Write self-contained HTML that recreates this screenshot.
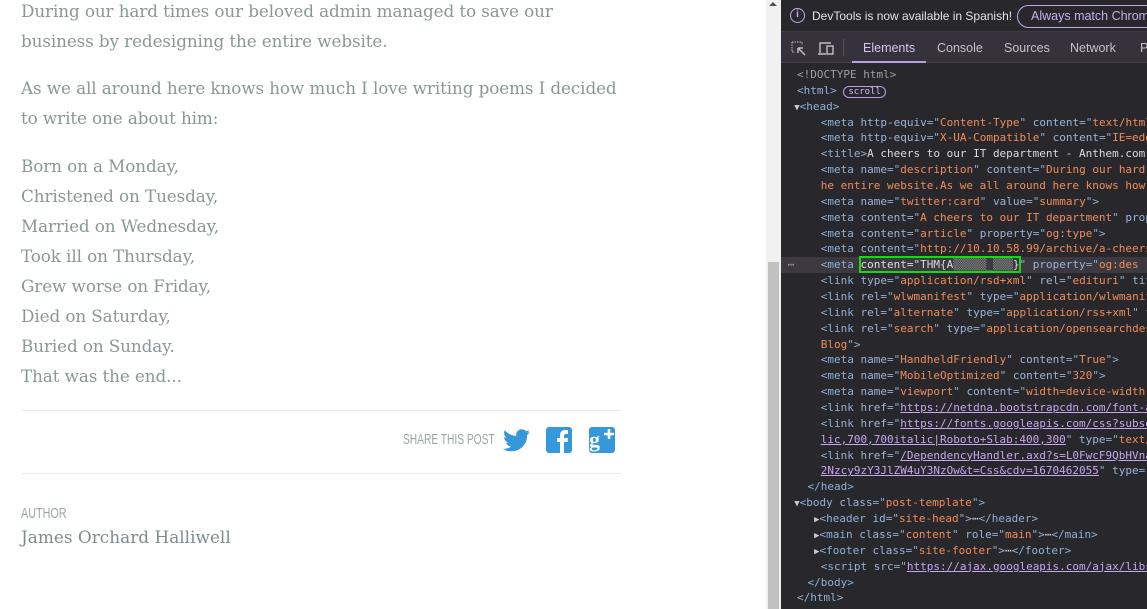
<!DOCTYPE html>
<html><head><meta charset="utf-8">
<style>
*{margin:0;padding:0;box-sizing:border-box}
html,body{width:1147px;height:609px;overflow:hidden;background:#fff;position:relative}
.p{position:absolute;left:21px;font-family:"DejaVu Serif","Liberation Serif",serif;font-size:16.8px;color:#8a9797;white-space:nowrap;letter-spacing:-0.1px}
.sb{position:absolute;left:766px;top:0;width:15px;height:609px;background:#f1f1f1}
.thumb{position:absolute;left:768px;top:262px;width:11px;height:347px;background:#c1c1c1}
.dt{position:absolute;left:781px;top:0;width:366px;height:609px;background:#28272c;overflow:hidden}
.top{position:absolute;left:0;top:0;width:366px;height:32px;background:#28272c;border-bottom:1px solid #3d3b42}
.tabs{position:absolute;left:0;top:32px;width:366px;height:31px;background:#35323b;border-bottom:1px solid #45424b}
.tab{position:absolute;top:9px;font-family:"Liberation Sans",sans-serif;font-size:12.5px;color:#c3c1c8}
.code{position:absolute;left:0;top:67px;font-family:"DejaVu Sans Mono","Liberation Mono",monospace;font-size:11px;line-height:15.87px;color:#c8c8c8}
.code div{height:15.87px;white-space:pre}
.t{color:#8fb0d6}.a{color:#9bb5d8}.v{color:#f08d5a}.x{color:#dcdcdc}.l{color:#c9a5ef;text-decoration:underline}.g{color:#a0a0a0}
.hl{background:#3c3a40}
</style></head><body>
<div class="p" style="top:1px">During our hard times our beloved admin managed to save our</div>
<div class="p" style="top:31px">business by redesigning the entire website.</div>
<div class="p" style="top:78px">As we all around here knows how much I love writing poems I decided</div>
<div class="p" style="top:108px">to write one about him:</div>
<div class="p" style="top:156px">Born on a Monday,</div>
<div class="p" style="top:186px">Christened on Tuesday,</div>
<div class="p" style="top:216px">Married on Wednesday,</div>
<div class="p" style="top:246px">Took ill on Thursday,</div>
<div class="p" style="top:276px">Grew worse on Friday,</div>
<div class="p" style="top:306px">Died on Saturday,</div>
<div class="p" style="top:336px">Buried on Sunday.</div>
<div class="p" style="top:366px">That was the end...</div>
<div style="position:absolute;left:21px;top:410px;width:600px;height:1px;background:#e8ebeb"></div>
<div style="position:absolute;left:21px;top:473px;width:600px;height:1px;background:#e8ebeb"></div>
<div style="position:absolute;left:403px;top:431px;font-family:'Liberation Sans',sans-serif;font-size:15px;color:#9aa5a5;transform:scaleX(0.68);transform-origin:left top;white-space:nowrap">SHARE THIS POST</div>
<svg style="position:absolute;left:503px;top:429px" width="27" height="23" viewBox="0 0 24 20"><path fill="#3498db" d="M24 2.4c-.9.4-1.8.6-2.8.8 1-.6 1.800-1.6 2.2-2.7-1 .6-2 1-3.1 1.2C19.3.7 18 0 16.6 0c-2.7 0-4.9 2.2-4.9 4.9 0 .4 0 .8.1 1.1C7.7 5.8 4.1 3.9 1.7.9c-.4.7-.7 1.6-.7 2.5 0 1.7.9 3.2 2.200 4.1-.8 0-1.6-.2-2.2-.6v.1c0 2.4 1.700 4.4 3.900 4.8-.4.1-.8.2-1.3.2-.3 0-.6 0-.9-.1.6 2 2.4 3.4 4.6 3.4-1.7 1.3-3.8 2.1-6.1 2.1H0c2.2 1.4 4.8 2.2 7.5 2.2 9.1 0 14-7.5 14-14v-.6c1-.7 1.8-1.6 2.5-2.6z"/></svg>
<svg style="position:absolute;left:546px;top:427px" width="26" height="26" viewBox="0 0 26 26"><rect width="26" height="26" rx="3" fill="#3498db"/><path fill="#fff" d="M14 26V15h-3v-4h3V8c0-3 2-5 5-5h3v4h-2c-1 0-2 .5-2 2v2h4l-.5 4H18v11z"/></svg>
<svg style="position:absolute;left:589px;top:427px" width="26" height="26" viewBox="0 0 26 26"><rect width="26" height="26" rx="3" fill="#3498db"/><text x="0" y="20" font-family="Liberation Serif,serif" font-size="22" font-weight="bold" fill="#fff">g</text><path d="M15 7h10M20 2v10" stroke="#fff" stroke-width="2.6"/></svg>
<div style="position:absolute;left:21px;top:505px;font-family:'Liberation Sans',sans-serif;font-size:15px;color:#9aa5a5;transform:scaleX(0.72);transform-origin:left top">AUTHOR</div>
<div style="position:absolute;left:21px;top:527px;font-family:'DejaVu Serif','Liberation Serif',serif;font-size:16.9px;color:#7e8c8c">James Orchard Halliwell</div>
<div class="sb"></div><div class="thumb"></div>
<div style="position:absolute;left:769px;top:2px;width:0;height:0;border-left:4px solid transparent;border-right:4px solid transparent;border-bottom:4px solid #505050"></div>
<div class="dt">
 <div class="top">
  <div style="position:absolute;left:9px;top:8px;width:15px;height:15px;border:1.5px solid #c5a6ef;border-radius:50%;color:#c5a6ef;font:bold 10px 'Liberation Sans',sans-serif;text-align:center;line-height:12px">i</div>
  <div style="position:absolute;left:31px;top:9px;font-family:'Liberation Sans',sans-serif;font-size:12px;color:#e3e3e3;white-space:nowrap">DevTools is now available in Spanish!</div>
  <div style="position:absolute;left:236px;top:5px;width:160px;height:23px;border:1px solid #c5a6ef;border-radius:12px;font-family:'Liberation Sans',sans-serif;font-size:12.5px;color:#c9adf0;padding:3px 0 0 13px;white-space:nowrap">Always match Chrome</div>
 </div>
 <div class="tabs">
  <svg style="position:absolute;left:10px;top:9px" width="16" height="16" viewBox="0 0 16 16"><path d="M1 1h10v3M1 1v10h3" stroke="#c0c0c0" stroke-dasharray="1.5 1" fill="none"/><path d="M7 7l7 7M7 7v5M7 7h5" stroke="#c0c0c0" stroke-width="1.5" fill="none"/></svg>
  <svg style="position:absolute;left:37px;top:9px" width="17" height="15" viewBox="0 0 17 15"><path d="M2 12V2h11M0 13h8" stroke="#c0c0c0" stroke-width="1.4" fill="none"/><rect x="9" y="5" width="6" height="8" stroke="#c0c0c0" stroke-width="1.4" fill="none"/></svg>
  <div style="position:absolute;left:62px;top:7px;width:1px;height:17px;background:#55525a"></div>
  <div class="tab" style="left:82px;color:#d5c7ee">Elements</div>
  <div style="position:absolute;left:71px;top:29px;width:74px;height:2px;background:#b89ee6"></div>
  <div class="tab" style="left:156px">Console</div>
  <div class="tab" style="left:223px">Sources</div>
  <div class="tab" style="left:289px">Network</div>
  <div class="tab" style="left:359px">P</div>
 </div>
 <div class="code"><div class="g" style="padding-left:16px">&lt;!DOCTYPE html&gt;</div><div style="padding-left:16px"><span class="t">&lt;html&gt;</span> <span style="border:1px solid #b89ee6;border-radius:7px;font-size:9px;color:#d0c0ee;padding:0 4px">scroll</span></div><div>  <span style="color:#ccc;font-size:9px">▼</span><span class="t">&lt;head&gt;</span></div><div>      <span class="t">&lt;meta </span><span class="a">http-equiv</span><span class="t">="</span><span class="v">Content-Type</span><span class="t">" </span><span class="a">content</span><span class="t">="</span><span class="v">text/html</span></div><div>      <span class="t">&lt;meta </span><span class="a">http-equiv</span><span class="t">="</span><span class="v">X-UA-Compatible</span><span class="t">" </span><span class="a">content</span><span class="t">="</span><span class="v">IE=edge</span></div><div>      <span class="t">&lt;title&gt;</span><span class="x">A cheers to our IT department - Anthem.com</span></div><div>      <span class="t">&lt;meta </span><span class="a">name</span><span class="t">="</span><span class="v">description</span><span class="t">" </span><span class="a">content</span><span class="t">="</span><span class="v">During our hard</span></div><div class="v">      he entire website.As we all around here knows how</div><div>      <span class="t">&lt;meta </span><span class="a">name</span><span class="t">="</span><span class="v">twitter:card</span><span class="t">" </span><span class="a">value</span><span class="t">="</span><span class="v">summary</span><span class="t">"&gt;</span></div><div>      <span class="t">&lt;meta </span><span class="a">content</span><span class="t">="</span><span class="v">A cheers to our IT department</span><span class="t">" </span><span class="a">prop</span></div><div>      <span class="t">&lt;meta </span><span class="a">content</span><span class="t">="</span><span class="v">article</span><span class="t">" </span><span class="a">property</span><span class="t">="</span><span class="v">og:type</span><span class="t">"&gt;</span></div><div>      <span class="t">&lt;meta </span><span class="a">content</span><span class="t">="</span><span class="v">http://10.10.58.99/archive/a-cheers</span></div><div class="hl"><span class="g"> ⋯ </span>   <span class="t">&lt;meta </span><span style="outline:2px solid #16d916;color:#dcdcdc">content="THM{A<span style="color:#888">▒▒▒▒▒_▒▒▒</span>}</span><span class="t">" </span><span class="a">property</span><span class="t">="</span><span class="v">og:des</span></div><div>      <span class="t">&lt;link </span><span class="a">type</span><span class="t">="</span><span class="v">application/rsd+xml</span><span class="t">" </span><span class="a">rel</span><span class="t">="</span><span class="v">edituri</span><span class="t">" </span><span class="a">tit</span></div><div>      <span class="t">&lt;link </span><span class="a">rel</span><span class="t">="</span><span class="v">wlwmanifest</span><span class="t">" </span><span class="a">type</span><span class="t">="</span><span class="v">application/wlwmanif</span></div><div>      <span class="t">&lt;link </span><span class="a">rel</span><span class="t">="</span><span class="v">alternate</span><span class="t">" </span><span class="a">type</span><span class="t">="</span><span class="v">application/rss+xml</span><span class="t">" f</span></div><div>      <span class="t">&lt;link </span><span class="a">rel</span><span class="t">="</span><span class="v">search</span><span class="t">" </span><span class="a">type</span><span class="t">="</span><span class="v">application/opensearchdes</span></div><div>      <span class="v">Blog</span><span class="t">"&gt;</span></div><div>      <span class="t">&lt;meta </span><span class="a">name</span><span class="t">="</span><span class="v">HandheldFriendly</span><span class="t">" </span><span class="a">content</span><span class="t">="</span><span class="v">True</span><span class="t">"&gt;</span></div><div>      <span class="t">&lt;meta </span><span class="a">name</span><span class="t">="</span><span class="v">MobileOptimized</span><span class="t">" </span><span class="a">content</span><span class="t">="</span><span class="v">320</span><span class="t">"&gt;</span></div><div>      <span class="t">&lt;meta </span><span class="a">name</span><span class="t">="</span><span class="v">viewport</span><span class="t">" </span><span class="a">content</span><span class="t">="</span><span class="v">width=device-width,</span></div><div>      <span class="t">&lt;link </span><span class="a">href</span><span class="t">="</span><span class="l">https://netdna.bootstrapcdn.com/font-a</span></div><div>      <span class="t">&lt;link </span><span class="a">href</span><span class="t">="</span><span class="l">https://fonts.googleapis.com/css?subse</span></div><div>      <span class="l">lic,700,700italic|Roboto+Slab:400,300</span><span class="t">" </span><span class="a">type</span><span class="t">="</span><span class="v">text/</span></div><div>      <span class="t">&lt;link </span><span class="a">href</span><span class="t">="</span><span class="l">/DependencyHandler.axd?s=L0FwcF9QbHVna</span></div><div>      <span class="l">2Nzcy9zY3JlZW4uY3NzOw&amp;t=Css&amp;cdv=1670462055</span><span class="t">" </span><span class="a">type</span><span class="t">="</span></div><div>    <span class="t">&lt;/head&gt;</span></div><div>  <span style="color:#ccc;font-size:9px">▼</span><span class="t">&lt;body </span><span class="a">class</span><span class="t">="</span><span class="v">post-template</span><span class="t">"&gt;</span></div><div>     <span style="color:#ccc;font-size:9px">▶</span><span class="t">&lt;header </span><span class="a">id</span><span class="t">="</span><span class="v">site-head</span><span class="t">"&gt;</span><span class="x">⋯</span><span class="t">&lt;/header&gt;</span></div><div>     <span style="color:#ccc;font-size:9px">▶</span><span class="t">&lt;main </span><span class="a">class</span><span class="t">="</span><span class="v">content</span><span class="t">" </span><span class="a">role</span><span class="t">="</span><span class="v">main</span><span class="t">"&gt;</span><span class="x">⋯</span><span class="t">&lt;/main&gt;</span></div><div>     <span style="color:#ccc;font-size:9px">▶</span><span class="t">&lt;footer </span><span class="a">class</span><span class="t">="</span><span class="v">site-footer</span><span class="t">"&gt;</span><span class="x">⋯</span><span class="t">&lt;/footer&gt;</span></div><div>      <span class="t">&lt;script </span><span class="a">src</span><span class="t">="</span><span class="l">https://ajax.googleapis.com/ajax/libs</span></div><div>    <span class="t">&lt;/body&gt;</span></div><div style="padding-left:16px"><span class="t">&lt;/html&gt;</span></div></div>
</div>
</body></html>
